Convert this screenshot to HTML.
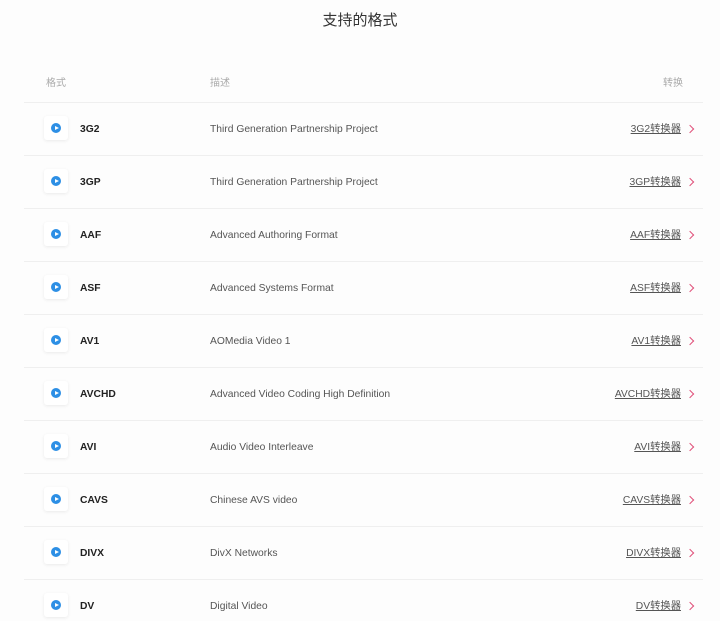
<!DOCTYPE html>
<html><head><meta charset="utf-8"><style>
html,body{margin:0;height:621px;overflow:hidden}
body{background:#fdfdfd;font-family:"Liberation Sans","Noto Sans CJK SC",sans-serif;width:720px;position:relative}
h1{margin:0;position:absolute;top:11px;left:0;width:720px;text-align:center;font-size:15px;line-height:20px;font-weight:normal;color:#333}
.hdr{position:absolute;top:78px;font-size:10px;line-height:12px;color:#aaa}
.line{position:absolute;left:24px;width:679px;height:1px;background:#efefef}
.row{position:absolute;left:0;width:720px;height:53px}
.row div{white-space:nowrap;line-height:12px}
.ic{position:absolute;left:44px;width:24px;height:24px;background:#fff;border-radius:3px;box-shadow:0 1px 3px rgba(0,0,0,.08)}
.ic i{position:absolute;left:7px;top:7px;width:10px;height:10px;border-radius:50%;background:#2d8fe5}
.ic i:after{content:"";position:absolute;left:4px;top:2.5px;border-left:4px solid #fff;border-top:2.5px solid transparent;border-bottom:2.5px solid transparent}
.n{position:absolute;left:80px;top:21.5px;font-size:10.3px;font-weight:bold;color:#222}
.d{position:absolute;left:210px;top:21.5px;font-size:10.3px;color:#555}
.c{position:absolute;right:39px;top:21.5px;font-size:10.3px;color:#555;text-decoration:underline}
.a{position:absolute;left:687px;top:24px;width:5px;height:5px;border-right:1.2px solid #e0507a;border-top:1.2px solid #e0507a;transform:rotate(45deg)}
</style></head><body>
<h1>支持的格式</h1>
<div class="hdr" style="left:46px">格式</div>
<div class="hdr" style="left:210px">描述</div>
<div class="hdr" style="right:37px">转换</div>
<div class="line" style="top:102px"></div>
<div class="row" style="top:102px"><div class="ic" style="top:14px"><i></i></div><div class="n">3G2</div><div class="d">Third Generation Partnership Project</div><div class="c">3G2转换器</div><div class="a"></div></div>
<div class="line" style="top:155px"></div>
<div class="row" style="top:155px"><div class="ic" style="top:14px"><i></i></div><div class="n">3GP</div><div class="d">Third Generation Partnership Project</div><div class="c">3GP转换器</div><div class="a"></div></div>
<div class="line" style="top:208px"></div>
<div class="row" style="top:208px"><div class="ic" style="top:14px"><i></i></div><div class="n">AAF</div><div class="d">Advanced Authoring Format</div><div class="c">AAF转换器</div><div class="a"></div></div>
<div class="line" style="top:261px"></div>
<div class="row" style="top:261px"><div class="ic" style="top:14px"><i></i></div><div class="n">ASF</div><div class="d">Advanced Systems Format</div><div class="c">ASF转换器</div><div class="a"></div></div>
<div class="line" style="top:314px"></div>
<div class="row" style="top:314px"><div class="ic" style="top:14px"><i></i></div><div class="n">AV1</div><div class="d">AOMedia Video 1</div><div class="c">AV1转换器</div><div class="a"></div></div>
<div class="line" style="top:367px"></div>
<div class="row" style="top:367px"><div class="ic" style="top:14px"><i></i></div><div class="n">AVCHD</div><div class="d">Advanced Video Coding High Definition</div><div class="c">AVCHD转换器</div><div class="a"></div></div>
<div class="line" style="top:420px"></div>
<div class="row" style="top:420px"><div class="ic" style="top:14px"><i></i></div><div class="n">AVI</div><div class="d">Audio Video Interleave</div><div class="c">AVI转换器</div><div class="a"></div></div>
<div class="line" style="top:473px"></div>
<div class="row" style="top:473px"><div class="ic" style="top:14px"><i></i></div><div class="n">CAVS</div><div class="d">Chinese AVS video</div><div class="c">CAVS转换器</div><div class="a"></div></div>
<div class="line" style="top:526px"></div>
<div class="row" style="top:526px"><div class="ic" style="top:14px"><i></i></div><div class="n">DIVX</div><div class="d">DivX Networks</div><div class="c">DIVX转换器</div><div class="a"></div></div>
<div class="line" style="top:579px"></div>
<div class="row" style="top:579px"><div class="ic" style="top:14px"><i></i></div><div class="n">DV</div><div class="d">Digital Video</div><div class="c">DV转换器</div><div class="a"></div></div>
</body></html>
